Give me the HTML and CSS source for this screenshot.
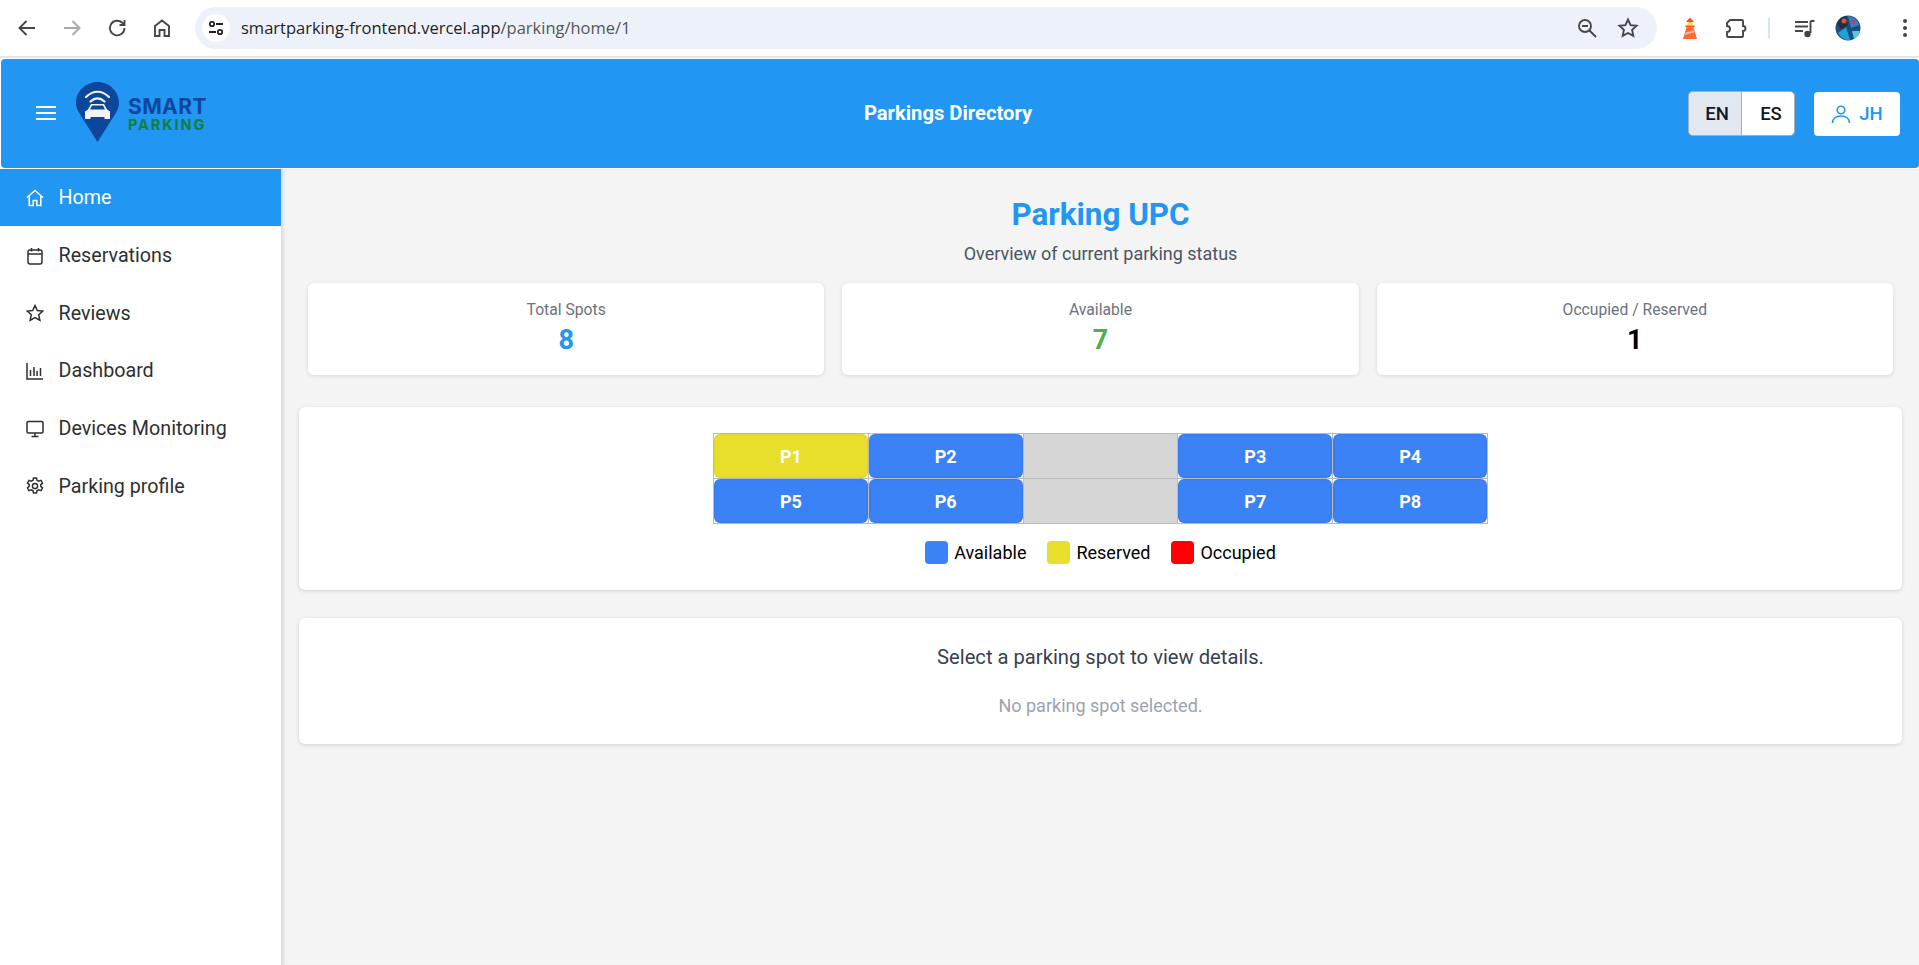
FILE: index.html
```html
<!DOCTYPE html>
<html lang="en">
<head>
<meta charset="utf-8">
<title>Smart Parking</title>
<link rel="stylesheet" href="styles.css">
</head>
<body>
<div class="browser">
  <div class="nav-icons">
    <svg class="ci" viewBox="0 0 24 24"><path d="M20 12H5M11.500 5L4.500 12l7 7" class="st"/></svg>
    <svg class="ci" viewBox="0 0 24 24"><path d="M4 12h15M12.500 5l7 7-7 7" class="st dim"/></svg>
    <svg class="ci" viewBox="0 0 24 24"><path d="M19.500 12a7.300 7.300 0 1 1-2.200-5.200L19.500 9M19.500 4v5h-5" class="st"/></svg>
    <svg class="ci" viewBox="0 0 24 24"><path d="M5 20V10l7-5.500L19 10v10h-4.500v-6h-5v6z" class="st"/></svg>
  </div>
  <div class="omnibox">
    <span class="tune"><svg width="18" height="18" viewBox="0 0 18 18"><circle cx="5" cy="5" r="2.200" class="st2"/><path d="M9 5h7M2 13h7" class="st2"/><circle cx="13" cy="13" r="2.200" class="st2"/></svg></span>
    <span class="url">smartparking-frontend.vercel.app<span class="url-path">/parking/home/1</span></span>
    <span class="omni-right">
      <svg class="ci" viewBox="0 0 24 24"><circle cx="10" cy="10" r="6" class="st"/><path d="M7 10h6M14.500 14.500L21 21" class="st"/></svg>
      <svg class="ci" viewBox="0 0 24 24"><path d="M12 3.500l2.600 5.600 6 .7-4.500 4.100 1.200 6L12 17l-5.300 2.900 1.200-6L3.400 9.800l6-.7z" class="st"/></svg>
    </span>
  </div>
  <div class="ext-icons">
    <svg class="ci" viewBox="0 0 24 24"><path d="M12 1.500L16 6H8z" fill="#f4511e"/><rect x="9.500" y="6" width="5" height="3.500" fill="#ffd54f"/><rect x="7.500" y="9.500" width="9" height="1.800" fill="#f4511e"/><path d="M8.500 11.300h7L19 23H5z" fill="#ff6a33"/><path d="M7.600 16.500l8.900-2.600.6 2.200-10.100 3z" fill="#ffb79c"/></svg>
    <svg class="ci puzzle" viewBox="0 0 24 24"><path d="M6 4h12a1 1 0 0 1 1 1v5a2.500 2.500 0 0 1 0 5v5a1 1 0 0 1-1 1H4a1 1 0 0 1-1-1v-4a3 3 0 0 0 0-6V7z" class="st"/></svg>
    <span class="sep"></span>
    <svg class="ci" viewBox="0 0 24 24"><path d="M2 6h13M2 10.500h13M2 15h8" class="st"/><path d="M17.500 5v12M17.500 5h4" class="st"/><circle cx="14.500" cy="18" r="3.200" fill="#444"/></svg>
    <svg class="avatar" viewBox="0 0 26 26"><circle cx="13" cy="13" r="12.500" fill="#17507e"/><path d="M2 9a12 12 0 0 1 9-8l2 9-6 5z" fill="#2c2c3c"/><path d="M13 1a12 12 0 0 1 11 9l-8 3z" fill="#3d79cf"/><path d="M3 18l8-6 4 13a12 12 0 0 1-12-7z" fill="#1da1d8"/><path d="M17 16l8 0a12 12 0 0 1-6 8z" fill="#5ec6d8"/><circle cx="9" cy="6" r="2.500" fill="#d8543c"/><circle cx="18" cy="7" r="2" fill="#c8404c"/></svg>
    <svg class="ci" viewBox="0 0 24 24"><circle cx="12" cy="5" r="2" fill="#444"/><circle cx="12" cy="12" r="2" fill="#444"/><circle cx="12" cy="19" r="2" fill="#444"/></svg>
  </div>
</div>

<header class="topbar">
  <div class="brand">
    <button class="burger" aria-label="Menu"><span></span><span></span><span></span></button>
    <svg class="pin" viewBox="0 0 43 60">
      <path d="M21.500 60L5 34C1.500 28.500 0 25 0 21 0 9.500 9.500 0 21.500 0S43 9.500 43 21c0 4-1.500 7.500-5 13z" fill="#0d479b"/>
      <path d="M10 15C17 8 26 8 33 15M14.500 19.500c4.500-4 9.500-4 14 0" fill="none" stroke="#f2f4f8" stroke-width="2.200" stroke-linecap="round"/>
      <path d="M9 37V29.500l3-2 3-5.500h13l3 5.500 3 2V37h-5.500v-2h-14v2z" fill="#f2f4f8"/>
      <path d="M16 23.500h11l2 4H14z" fill="#0d479b"/>
    </svg>
    <div class="wordmark"><span class="smart">SMART</span><span class="parking">PARKING</span></div>
  </div>
  <div class="page-title">Parkings Directory</div>
  <div class="top-actions">
    <div class="lang"><span class="lang-opt on">EN</span><span class="lang-opt">ES</span></div>
    <button class="user">
      <svg width="20" height="20" viewBox="0 0 20 20"><circle cx="10" cy="6" r="3.800" class="ust"/><path d="M1.500 19c0-4.500 3.500-7 8.500-7s8.500 2.500 8.500 7" class="ust"/></svg>
      JH
    </button>
  </div>
</header>

<div class="shell">
  <nav class="sidebar">
    <a class="item active"><svg class="ni" viewBox="0 0 18 18"><path d="M1 8.500L9 1.500l8 7M3.200 7v9.500h4v-5h3.600v5h4V7"/></svg>Home</a>
    <a class="item"><svg class="ni" viewBox="0 0 18 18"><rect x="2" y="3" width="14" height="14" rx="2"/><path d="M2 7h14M5.500 1v3.500M12.500 1v3.500"/></svg>Reservations</a>
    <a class="item"><svg class="ni" viewBox="0 0 18 18"><path d="M9 1.500l2.300 5 5.500.6-4.100 3.700 1.200 5.400L9 13.500l-4.900 2.700 1.200-5.400L1.200 7.100l5.500-.6z"/></svg>Reviews</a>
    <a class="item"><svg class="ni" viewBox="0 0 18 18"><path d="M1 1v16h16M4.500 14V8M8 14V5M11 14V9M14.500 14V6"/></svg>Dashboard</a>
    <a class="item"><svg class="ni" viewBox="0 0 18 18"><rect x="1" y="1.500" width="16" height="11.500" rx="1.200"/><path d="M9 13v3.500M5.500 16.500h7"/></svg>Devices Monitoring</a>
    <a class="item"><svg class="ni" viewBox="0 0 18 18"><circle cx="9" cy="9" r="2.600"/><path d="M7.500 1h3l.5 2.300 1.700.9L15 3.400l1.500 2.600-1.700 1.600v1.800l1.700 1.600L15 13.700l-2.300-.8-1.700.9-.5 2.200h-3L7 13.800l-1.700-.9-2.300.8L1.500 11l1.700-1.600V7.600L1.500 6 3 3.400l2.300.8L7 3.300z"/></svg>Parking profile</a>
  </nav>
  <main class="content">
    <h1 class="lot-name">Parking UPC</h1>
    <p class="lot-sub">Overview of current parking status</p>
    <section class="stats">
      <div class="stat"><div class="stat-label">Total Spots</div><div class="stat-value blue">8</div></div>
      <div class="stat"><div class="stat-label">Available</div><div class="stat-value green">7</div></div>
      <div class="stat"><div class="stat-label">Occupied / Reserved</div><div class="stat-value">1</div></div>
    </section>
    <section class="panel map-panel">
      <div class="lot">
        <div class="cell"><div class="spot yellow">P1</div></div>
        <div class="cell"><div class="spot">P2</div></div>
        <div class="cell"></div>
        <div class="cell"><div class="spot">P3</div></div>
        <div class="cell"><div class="spot">P4</div></div>
        <div class="cell"><div class="spot">P5</div></div>
        <div class="cell"><div class="spot">P6</div></div>
        <div class="cell"></div>
        <div class="cell"><div class="spot">P7</div></div>
        <div class="cell"><div class="spot">P8</div></div>
      </div>
      <div class="legend">
        <div class="legend-item"><span class="swatch s-blue"></span>Available</div>
        <div class="legend-item"><span class="swatch s-yellow"></span>Reserved</div>
        <div class="legend-item"><span class="swatch s-red"></span>Occupied</div>
      </div>
    </section>
    <section class="panel detail-panel">
      <p class="detail-title">Select a parking spot to view details.</p>
      <p class="detail-empty">No parking spot selected.</p>
    </section>
  </main>
</div>
</body>
</html>
```
FILE: styles.css
```css
* { box-sizing: border-box; }
html, body { margin: 0; height: 100%; }
body {
  font-family: Roboto, "Liberation Sans", sans-serif;
  background: #fff;
  display: flex;
  flex-direction: column;
  overflow: hidden;
  color: #1f2937;
}

/* browser chrome */
.browser {
  height: 59px;
  flex: none;
  display: flex;
  align-items: center;
  background: #fff;
  border-bottom: 1px solid #fff;
  box-shadow: inset 0 -3px 0 -1px #e6e6e6;
  padding: 0 0 3px 0;
}
.nav-icons { display: flex; gap: 21px; padding-left: 15px; width: 195px; }
.ci { width: 24px; height: 24px; flex: none; }
.st { fill: none; stroke: #474747; stroke-width: 1.9; }
.st.dim { stroke: #a8a8a8; }
.st2 { fill: none; stroke: #222; stroke-width: 1.8; }
.omnibox {
  width: 1462px;
  height: 42px;
  border-radius: 21px;
  background: #edf2fa;
  display: flex;
  align-items: center;
  padding-left: 7px;
}
.tune {
  width: 28px; height: 28px; border-radius: 50%;
  background: #fff;
  display: flex; align-items: center; justify-content: center;
}
.url { margin-left: 11px; font-family: "Open Sans", sans-serif; font-size: 16.500px; color: #1f1f1f; }
.url-path { color: #555; }
.omni-right { margin-left: auto; display: flex; gap: 17px; padding-right: 17px; }
.ext-icons { display: flex; align-items: center; margin-left: 21px; }
.ext-icons .puzzle { margin-left: 22px; }
.sep { width: 2px; height: 20px; background: #d3e3fd; margin: 0 23px 0 20px; }
.avatar { width: 26px; height: 26px; margin: 0 32px 0 18px; }

/* app header */
.topbar {
  flex: none;
  height: 109px;
  margin-left: 1px;
  background: #2196f3;
  border-radius: 4px;
  display: flex;
  align-items: center;
  justify-content: space-between;
  padding: 0 19px 0 35px;
  color: #fff;
}
.brand { display: flex; align-items: center; width: 172px; }
.burger {
  width: 20px; height: 14px; padding: 0; border: 0; background: none;
  margin-bottom: 1px;
  display: flex; flex-direction: column; justify-content: space-between;
}
.burger span { display: block; height: 2px; background: #fff; }
.pin { width: 43px; height: 60px; margin: 0 0 3px 20px; flex: none; }
.wordmark { display: flex; flex-direction: column; gap: 1px; margin-left: 9px; font-family: Inter, sans-serif; font-weight: 700; }
.smart { color: #0d479b; font-size: 21px; line-height: 21px; letter-spacing: .4px; }
.parking { color: #0f8040; font-size: 14.500px; line-height: 14px; letter-spacing: 1.900px; }
.page-title { font-size: 20.200px; font-weight: 700; padding-bottom: 2px; }
.top-actions { display: flex; align-items: center; gap: 19px; }
.lang {
  display: flex;
  height: 45px;
  border: 1px solid #a3aebd;
  border-radius: 5px;
  overflow: hidden;
  background: #fff;
  color: #0f172a;
  font-size: 18.500px;
  font-weight: 500;
}
.lang-opt { width: 52px; padding-left: 6px; display: flex; align-items: center; justify-content: center; }
.lang-opt.on { background: #e2e8f0; border-right: 1px solid #a3aebd; width: 53px; padding-left: 4px; }
.user {
  width: 86px; height: 44px;
  border: 0; border-radius: 4px;
  background: #fff;
  color: #2196f3;
  font: 500 18.500px Roboto, sans-serif;
  display: flex; align-items: center; justify-content: center; gap: 8px;
}
.ust { fill: none; stroke: #2196f3; stroke-width: 1.600; }

/* shell */
.shell { flex: 1; display: flex; margin-top: 1px; min-height: 0; }
.sidebar {
  width: 281px;
  flex: none;
  background: #fff;
}
.item {
  height: 57.700px;
  display: flex;
  align-items: center;
  padding-left: 26px;
  gap: 14.500px;
  font-size: 19.700px;
  color: #2f2f2f;
}
.item.active { background: #2196f3; color: #fff; height: 57px; margin-bottom: .700px; }
.ni { width: 18px; height: 18px; flex: none; fill: none; stroke: currentColor; stroke-width: 1.500; }

.content {
  flex: 1;
  background: #f4f4f4;
  box-shadow: inset 4px 0 4px -2px rgba(0,0,0,.12);
  padding: 0 17px 0 18px;
  min-width: 0;
}
.lot-name {
  margin: 0; padding-top: 26px;
  text-align: center;
  font-size: 31.400px; font-weight: 700; line-height: 40px;
  color: #2196f3;
}
.lot-sub { margin: 7px 0 0; text-align: center; font-size: 18px; line-height: 24px; color: #4b5563; }
.stats { display: grid; grid-template-columns: repeat(3, 1fr); gap: 18px; margin: 17px 9px 0; }
.stat {
  height: 92px; background: #fff; border-radius: 6px;
  box-shadow: 0 1px 4px rgba(0,0,0,.12);
  text-align: center; padding-top: 17px;
}
.stat-label { font-size: 15.700px; line-height: 20px; color: #6b7280; }
.stat-value { font-size: 27px; font-weight: 700; line-height: 36px; color: #000; margin-top: 2px; }
.blue { color: #2196f3; }
.green { color: #4caf50; }

.panel { background: #fff; border-radius: 6px; box-shadow: 0 1px 4px rgba(0,0,0,.14); text-align: center; }
.map-panel { margin-top: 32px; height: 183px; padding-top: 26px; }
.lot {
  width: 775px; margin: 0 auto;
  display: grid; grid-template-columns: repeat(5, 1fr); grid-auto-rows: 45px;
  border-top: 1px solid #bbb; border-left: 1px solid #bbb;
}
.cell { background: #d6d6d6; border-right: 1px solid #bbb; border-bottom: 1px solid #bbb; }
.cell:has(.spot) { background: #fff; }
.spot {
  height: 100%; border-radius: 6px;
  background: #3b82f6;
  color: #fff; font-size: 18px; font-weight: 700;
  display: flex; align-items: center; justify-content: center;
  box-shadow: inset 0 0 2px rgba(0,0,0,.15);
}
.spot.yellow { background: #e8de2c; }
.legend { display: flex; justify-content: center; gap: 21px; margin-top: 17px; font-size: 18px; color: #000; }
.legend-item { display: flex; align-items: center; gap: 6px; }
.swatch { width: 23px; height: 23px; border-radius: 4px; }
.s-blue { background: #3b82f6; }
.s-yellow { background: #e8de2c; }
.s-red { background: #ff0000; }

.detail-panel { margin-top: 28px; height: 126px; padding-top: 27px; }
.detail-title { margin: 0; font-size: 20.200px; line-height: 24px; color: #374151; }
.detail-empty { margin: 25px 0 0; font-size: 18px; line-height: 24px; color: #9ca3af; }
```
